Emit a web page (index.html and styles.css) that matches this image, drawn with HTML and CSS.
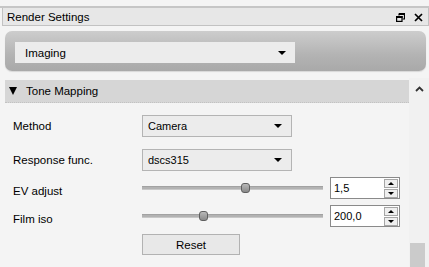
FILE: index.html
```html
<!DOCTYPE html>
<html lang="en">
<head>
    <meta charset="UTF-8">
    <title>Render Settings</title>
    <link rel="stylesheet" href="styles.css">
</head>
<body>
    <div class="dock">
        <div class="dock-top"></div>
        <div class="dock-title">
            <span>Render Settings</span>
            <div class="title-buttons">
                <svg width="9" height="9" viewBox="0 0 9 9">
                    <path d="M3 0.5h5.5v5.5h-2M3 0.5v2" fill="none" stroke="#000" stroke-width="1.2"/>
                    <rect x="3" y="0" width="6" height="2" fill="#000"/>
                    <rect x="0.6" y="3.6" width="5.4" height="4.8" fill="none" stroke="#000" stroke-width="1.2"/>
                    <rect x="0" y="3" width="6.6" height="2" fill="#000"/>
                </svg>
                <svg width="9" height="9" viewBox="0 0 9 9">
                    <path d="M1 1l7 7M8 1l-7 7" stroke="#000" stroke-width="1.7"/>
                </svg>
            </div>
        </div>

        <div class="page-bar">
            <div class="combo combo-wide">
                <span>Imaging</span>
                <i class="arrow"></i>
            </div>
        </div>

        <div class="scroll-area">
            <div class="content">
                <div class="section-header">
                    <i class="caret"></i> Tone Mapping
                </div>
                <div class="form">
                    <label class="field-label">Method</label>
                    <div class="combo combo-field">
                        <span>Camera</span>
                        <i class="arrow"></i>
                    </div>

                    <label class="field-label">Response func.</label>
                    <div class="combo combo-field">
                        <span>dscs315</span>
                        <i class="arrow"></i>
                    </div>

                    <label class="field-label">EV adjust</label>
                    <div class="slider-row">
                        <div class="slider">
                            <div class="groove"></div>
                            <div class="handle" style="left: 99px"></div>
                        </div>
                        <div class="spinbox">
                            <span>1,5</span>
                            <div class="spin-buttons">
                                <b class="up"></b>
                                <b class="down"></b>
                            </div>
                        </div>
                    </div>

                    <label class="field-label">Film iso</label>
                    <div class="slider-row">
                        <div class="slider">
                            <div class="groove"></div>
                            <div class="handle" style="left: 57px"></div>
                        </div>
                        <div class="spinbox">
                            <span>200,0</span>
                            <div class="spin-buttons">
                                <b class="up"></b>
                                <b class="down"></b>
                            </div>
                        </div>
                    </div>

                    <span></span>
                    <button class="btn">Reset</button>
                </div>
            </div>
            <div class="scrollbar">
                <svg width="9" height="6" viewBox="0 0 9 6" class="scroll-up">
                    <path d="M1 5l3.5-3.5L8 5" fill="none" stroke="#333" stroke-width="1.8"/>
                </svg>
                <div class="thumb"></div>
            </div>
        </div>
    </div>
</body>
</html>
```

FILE: styles.css
```css
* {
    margin: 0;
    padding: 0;
    box-sizing: border-box;
}

body {
    font-family: 'Liberation Sans', Arial, sans-serif;
    font-size: 11px;
    color: #000;
    background-color: #f4f4f4;
}

.dock {
    width: 429px;
    height: 267px;
    display: flex;
    flex-direction: column;
    overflow: hidden;
}

.dock-top {
    height: 8px;
    border-bottom: 2px solid #c6c6c6;
    flex: none;
}

.dock-title {
    flex: none;
    height: 18px;
    margin-left: 2px;
    padding: 0 5px 0 4px;
    display: flex;
    align-items: center;
    justify-content: space-between;
    background-color: #e7e7e7;
    border: 1px solid #c2c2c2;
    border-top: none;
    font-size: 11.5px;
}

.title-buttons {
    display: flex;
    gap: 9px;
    padding-top: 1px;
}

.page-bar {
    flex: none;
    height: 40px;
    margin: 5px 3px 0 5px;
    padding: 11px 0 0 10px;
    border-radius: 7px;
    background: linear-gradient(#cdcdcd, #b3b3b3 60%, #a9a9a9);
    box-shadow: 0 1px 1px #d8d8d8;
}

.combo {
    position: relative;
    display: flex;
    align-items: center;
    height: 21px;
    padding-left: 6px;
    background-color: #ececec;
}

.combo-wide {
    width: 280px;
    padding-left: 10px;
    font-size: 11.5px;
}

.combo-field {
    width: 150px;
    height: 22px;
    border: 1px solid #b4b4b4;
    padding-left: 5px;
}

.arrow {
    position: absolute;
    right: 9px;
    top: 50%;
    margin-top: -2px;
    width: 0;
    height: 0;
    border-left: 4px solid transparent;
    border-right: 4px solid transparent;
    border-top: 4px solid #000;
}

.scroll-area {
    flex: 1;
    display: flex;
    margin-top: 7px;
    min-height: 0;
}

.content {
    flex: 1;
    padding: 2px 0 0 5px;
}

.section-header {
    height: 23px;
    display: flex;
    align-items: center;
    padding-left: 4px;
    background-color: #d6d6d6;
    border-bottom: 1px dotted #c2c2c2;
    font-size: 11.5px;
}

.caret {
    width: 0;
    height: 0;
    margin-right: 9px;
    border-left: 4px solid transparent;
    border-right: 4px solid transparent;
    border-top: 8px solid #000;
}

.form {
    display: grid;
    grid-template-columns: 129px auto;
    align-items: center;
    justify-items: start;
    row-gap: 12px;
    padding: 12px 0 0 8px;
}

.form .slider-row {
    margin-top: -6px;
}

.form .btn {
    margin-top: -5px;
}

.field-label {
    font-size: 11.5px;
}

.slider-row {
    display: flex;
    align-items: center;
    gap: 7px;
}

.slider {
    position: relative;
    width: 181px;
    height: 22px;
}

.groove {
    position: absolute;
    left: 0;
    right: 0;
    top: 9px;
    height: 4px;
    background-color: #b2b2b2;
    border-top: 1px solid #a2a2a2;
    border-bottom: 1px solid #c8c8c8;
}

.handle {
    position: absolute;
    top: 6px;
    width: 9px;
    height: 10px;
    border: 1px solid #5f5f5f;
    border-radius: 3px;
    background: linear-gradient(#b8b8b8, #8a8a8a);
}

.spinbox {
    width: 70px;
    height: 22px;
    display: flex;
    align-items: center;
    justify-content: space-between;
    padding: 0 1px 0 3px;
    background-color: #fff;
    border: 1px solid #8a8a8a;
}

.spin-buttons {
    display: flex;
    flex-direction: column;
    gap: 1px;
}

.spin-buttons b {
    position: relative;
    display: block;
    width: 14px;
    height: 9px;
    background-color: #efefef;
    border: 1px solid #a6a6a6;
}

.spin-buttons b::after {
    content: '';
    position: absolute;
    left: 3px;
    width: 0;
    height: 0;
    border-left: 3px solid transparent;
    border-right: 3px solid transparent;
}

.spin-buttons .up::after {
    top: 2px;
    border-bottom: 3px solid #000;
}

.spin-buttons .down::after {
    top: 2px;
    border-top: 3px solid #000;
}

.btn {
    width: 98px;
    height: 21px;
    font-family: inherit;
    font-size: 11.5px;
    background-color: #e8e8e8;
    border: 1px solid #b2b2b2;
    color: #000;
}

.scrollbar {
    width: 20px;
    display: flex;
    flex-direction: column;
    align-items: center;
    padding: 8px 0 0 0;
    background-color: #f1f1f1;
}

.scroll-up {
    margin-left: 0;
}

.thumb {
    margin-top: auto;
    width: 15px;
    height: 24px;
    margin-left: -3px;
    background-color: #cbcbcb;
}
```
